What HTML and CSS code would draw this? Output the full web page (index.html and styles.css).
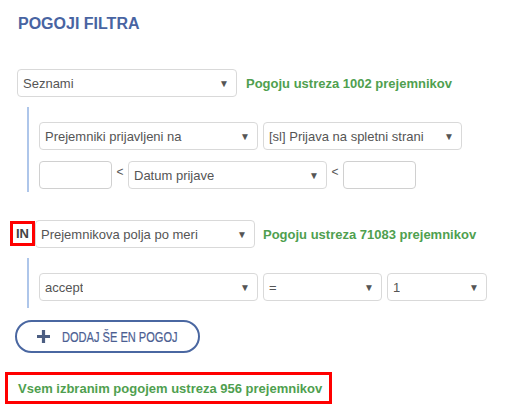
FILE: index.html
```html
<!DOCTYPE html>
<html lang="sl">
<head>
<meta charset="utf-8">
<title>Pogoji filtra</title>
<link rel="stylesheet" href="styles.css">
</head>
<body>
<div class="page">
  <h2 class="title">POGOJI FILTRA</h2>

  <div class="row cond">
    <div class="sel w220"><span>Seznami</span><i class="arr">▼</i></div>
    <span class="match">Pogoju ustreza 1002 prejemnikov</span>
  </div>

  <div class="nest nest1">
    <div class="row">
      <div class="sel w219"><span>Prejemniki prijavljeni na</span><i class="arr">▼</i></div>
      <div class="sel w199"><span>[sl] Prijava na spletni strani</span><i class="arr">▼</i></div>
    </div>
    <div class="row row2">
      <div class="inp"></div>
      <span class="lt">&lt;</span>
      <div class="sel w199"><span>Datum prijave</span><i class="arr">▼</i></div>
      <span class="lt">&lt;</span>
      <div class="inp"></div>
    </div>
  </div>

  <div class="row cond in-row">
    <span class="op">IN</span>
    <div class="sel w220"><span>Prejemnikova polja po meri</span><i class="arr">▼</i></div>
    <span class="match">Pogoju ustreza 71083 prejemnikov</span>
  </div>

  <div class="nest nest2">
    <div class="row">
      <div class="sel w219"><span>accept</span><i class="arr">▼</i></div>
      <div class="sel w119"><span>=</span><i class="arr">▼</i></div>
      <div class="sel w100"><span>1</span><i class="arr">▼</i></div>
    </div>
  </div>

  <button class="add" type="button">
    <svg class="plus" width="13" height="13" viewBox="0 0 13 13"><path d="M6.5 0v13M0 6.5h13" stroke="#4c5e82" stroke-width="3.2"/></svg>
    <span class="add-label">DODAJ ŠE EN POGOJ</span>
  </button>

  <div class="total">Vsem izbranim pogojem ustreza 956 prejemnikov</div>
</div>
</body>
</html>
```

FILE: styles.css
```css
html, body {
  margin: 0;
  padding: 0;
  background: #fff;
}
body {
  font-family: "Liberation Sans", Arial, sans-serif;
  color: #555;
}
.page {
  padding: 14px 0 0 0;
}
.title {
  margin: 0 0 0 18px;
  font-size: 16px;
  line-height: 20px;
  font-weight: bold;
  color: #4864a2;
}
.row {
  display: flex;
  align-items: center;
}
.cond {
  margin-top: 35px;
  padding-left: 17px;
}
.sel {
  box-sizing: border-box;
  height: 28px;
  border: 1px solid #d9d9d9;
  border-radius: 4px;
  background: #fff;
  display: flex;
  align-items: center;
  justify-content: space-between;
  padding: 0 7px 0 5px;
  font-size: 13px;
  color: #555;
  flex: none;
}
.sel span {
  white-space: nowrap;
  overflow: hidden;
}
.arr {
  font-style: normal;
  font-size: 10px;
  color: #555;
}
.w220 { width: 220px; }
.w219 { width: 219px; }
.w199 { width: 199px; }
.w119 { width: 119px; }
.w100 { width: 100px; }
.match {
  margin-left: 9px;
  font-size: 13px;
  font-weight: bold;
  color: #4f9f4f;
  white-space: nowrap;
}
.nest {
  margin-left: 27px;
  border-left: 2px solid #aec6ea;
  padding-left: 10px;
}
.nest1 {
  margin-top: 10px;
  padding-top: 15px;
  padding-bottom: 3px;
}
.nest .row .sel + .sel {
  margin-left: 5px;
}
.nest .row .w100 {
  margin-left: 4px;
}
.row2 {
  margin-top: 11px;
}
.inp {
  box-sizing: border-box;
  width: 73px;
  height: 28px;
  border: 1px solid #d0d0d0;
  border-radius: 4px;
  background: #fff;
  flex: none;
}
.lt {
  width: 16px;
  text-align: center;
  font-size: 12px;
  color: #555;
  margin-top: -6px;
}
.in-row {
  margin-top: 28px;
  padding-left: 10px;
}
.op {
  box-sizing: border-box;
  width: 25px;
  height: 25px;
  border: 3px solid #f00;
  font-size: 13px;
  font-weight: bold;
  color: #444;
  display: flex;
  align-items: center;
  justify-content: center;
  margin-top: -1px;
}
.in-row .match {
  margin-left: 8px;
}
.nest2 {
  margin-top: 10px;
  padding-top: 15px;
  padding-bottom: 7px;
}
.add {
  margin: 12px 0 0 15px;
  box-sizing: border-box;
  width: 185px;
  height: 33px;
  border: 2px solid #4a67a1;
  border-radius: 17px;
  background: #fff;
  display: flex;
  align-items: center;
  padding: 0 0 0 20px;
  cursor: pointer;
}
.plus {
  flex: none;
}
.add-label {
  display: inline-block;
  margin-left: 12px;
  font-family: "Liberation Sans", Arial, sans-serif;
  font-size: 14px;
  color: #4b5e92;
  white-space: nowrap;
  transform: scaleX(0.79);
  transform-origin: left center;
  -webkit-text-stroke: 0.2px #4b5e92;
}
.total {
  margin: 19px 0 0 5px;
  box-sizing: border-box;
  width: 327px;
  height: 32px;
  border: 3px solid #f00;
  padding-left: 10px;
  display: flex;
  align-items: center;
  font-size: 13px;
  font-weight: bold;
  color: #4f9f4f;
}
```
